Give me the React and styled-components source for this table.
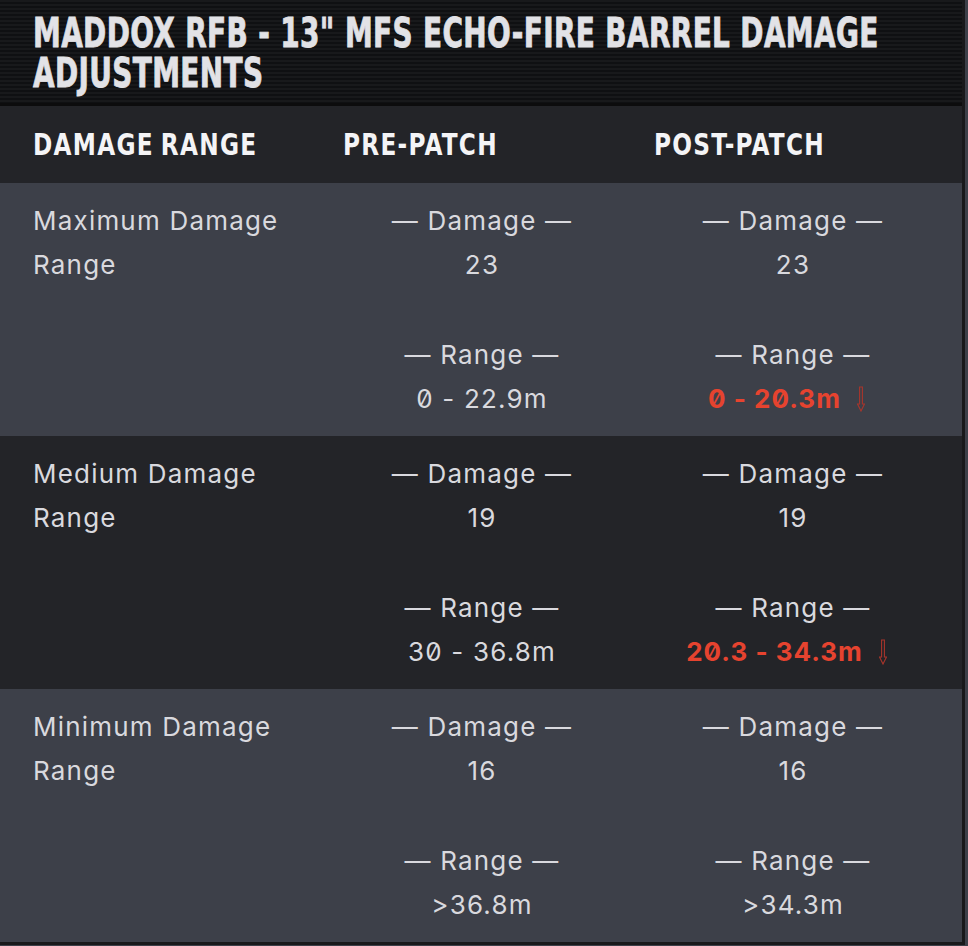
import React from 'react'
import styled, { createGlobalStyle } from 'styled-components'

const GlobalStyle = createGlobalStyle`
  html, body {
    margin: 0;
    padding: 0;
    background: #3d4049;
  }
  body {
    font-family: Inter, "Noto Sans", sans-serif;
  }
`

const Table = styled.div`
  width: 965px;
  border-right: 3px solid #19191b;
  border-bottom: 3px solid #19191b;
  box-sizing: border-box;
`

const TitleBar = styled.div`
  height: 106px;
  box-sizing: border-box;
  padding: 13px 33px 0 33px;
  overflow: hidden;
  border-bottom: 3px solid #0c0c0d;
  background: repeating-linear-gradient(
    to bottom,
    #18191b 0px,
    #18191b 2px,
    #0f1012 2px,
    #0f1012 4px
  );
`

// the reference uses a heavy condensed display face; squeeze a bold sans to match
const Title = styled.h1`
  display: inline-block;
  margin: 0;
  font-family: "DejaVu Sans Condensed", "DejaVu Sans", sans-serif;
  font-weight: 700;
  font-size: 40px;
  line-height: 40px;
  letter-spacing: 0.5px;
  color: #e2e2e6;
  -webkit-text-stroke: 0.8px #e2e2e6;
  text-transform: uppercase;
  white-space: nowrap;
  transform: scaleX(0.775);
  transform-origin: left top;
`

const Row = styled.div`
  display: grid;
  grid-template-columns: 310px 311px 311px;
  background: ${p => (p.$dark ? '#232428' : '#3d4049')};
`

const HeadRow = styled(Row)`
  height: 77px;
  align-items: center;
  background: #232428;
`

const HeadCell = styled.div`
  padding-left: 33px;
`

const HeadText = styled.span`
  display: inline-block;
  font-family: "DejaVu Sans Condensed", "DejaVu Sans", sans-serif;
  font-weight: 700;
  font-size: 30px;
  letter-spacing: 1.5px;
  word-spacing: -3px;
  color: #f4f4f6;
  white-space: nowrap;
  transform: scaleX(0.86);
  transform-origin: left center;
`

const LabelCell = styled.div`
  padding: 16px 0 15px 33px;
  font-size: 26px;
  line-height: 44px;
  letter-spacing: 1.2px;
  color: #d9d9de;
`

const ValueCell = styled.div`
  padding: 16px 0 15px 33px;
  display: flex;
  flex-direction: column;
  align-items: center;
  gap: 46px;
`

const Block = styled.div`
  display: flex;
  flex-direction: column;
  align-items: center;
  font-size: 26px;
  line-height: 44px;
  letter-spacing: 1.2px;
  color: #d9d9de;
  font-variant-numeric: slashed-zero;
  font-feature-settings: "zero" 1;
`

const Value = styled.div`
  display: flex;
  align-items: center;
  gap: 16px;
  color: ${p => (p.$nerf ? '#e6432f' : '#d9d9de')};
  font-weight: ${p => (p.$nerf ? 700 : 400)};
  letter-spacing: ${p => (p.$nerf ? '1px' : '1.2px')};
`

const ArrowIcon = styled.svg`
  margin-right: 13px;
`

const DownArrow = () => (
  <ArrowIcon width="8" height="26" viewBox="0 0 8 26" fill="none" stroke="#a8352c" strokeWidth="1.1">
    <path d="M2.6 1 H5.4 V18 H7.5 L4 25 L0.5 18 H2.6 Z" />
  </ArrowIcon>
)

const rows = [
  {
    label: ['Maximum Damage', 'Range'],
    pre: { dmg: '23', range: '0 - 22.9m' },
    post: { dmg: '23', range: '0 - 20.3m', nerf: true },
  },
  {
    label: ['Medium Damage', 'Range'],
    pre: { dmg: '19', range: '30 - 36.8m' },
    post: { dmg: '19', range: '20.3 - 34.3m', nerf: true },
    dark: true,
  },
  {
    label: ['Minimum Damage', 'Range'],
    pre: { dmg: '16', range: '>36.8m' },
    post: { dmg: '16', range: '>34.3m' },
  },
]

const Values = ({ data }) => (
  <ValueCell>
    <Block>
      <div>— Damage —</div>
      <Value>{data.dmg}</Value>
    </Block>
    <Block>
      <div>— Range —</div>
      <Value $nerf={data.nerf}>
        {data.range}
        {data.nerf && <DownArrow />}
      </Value>
    </Block>
  </ValueCell>
)

export default function App() {
  return (
    <>
      <GlobalStyle />
      <Table>
        <TitleBar>
          <Title>
            Maddox RFB - 13" MFS Echo-Fire Barrel Damage
            <br />
            Adjustments
          </Title>
        </TitleBar>
        <HeadRow>
          <HeadCell><HeadText>DAMAGE RANGE</HeadText></HeadCell>
          <HeadCell><HeadText>PRE-PATCH</HeadText></HeadCell>
          <HeadCell><HeadText>POST-PATCH</HeadText></HeadCell>
        </HeadRow>
        {rows.map(r => (
          <Row key={r.label[0]} $dark={r.dark}>
            <LabelCell>
              {r.label[0]}
              <br />
              {r.label[1]}
            </LabelCell>
            <Values data={r.pre} />
            <Values data={r.post} />
          </Row>
        ))}
      </Table>
    </>
  )
}
